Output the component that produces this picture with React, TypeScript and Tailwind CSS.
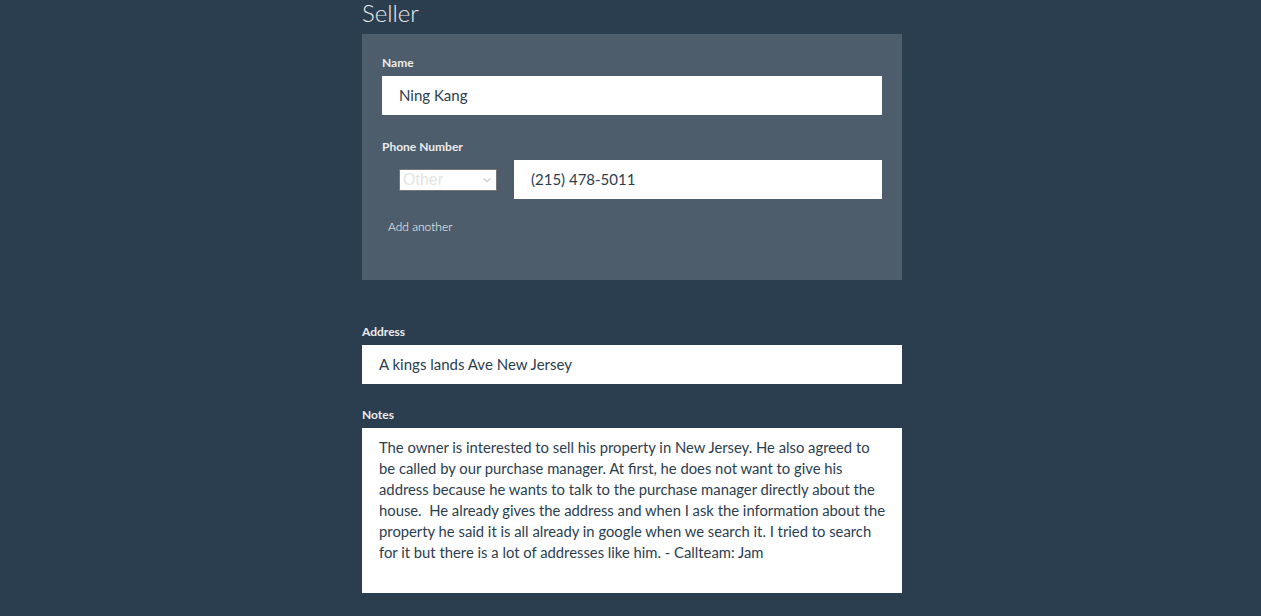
import React from "react";

const font = { fontFamily: "Lato, 'Open Sans', sans-serif" };

export default function App() {
  return (
    <div className="min-h-[616px] w-full bg-[#2b3e50] text-white" style={font}>
      <div className="mx-auto w-[543px] pl-[3px]">
        <h2 className="m-0 h-[34px] text-[24px] font-light leading-[26px] text-[#ebebeb]">Seller</h2>
        <div className="h-[246px] bg-[#4e5d6c] px-[20px] pt-[21px]">
          <label className="block h-[15px] text-[12px] font-bold leading-[15px] text-[#ebebeb]">Name</label>
          <div className="mt-[6px] flex h-[39px] items-center bg-white px-[17px] text-[15px] text-[#2b3e50]">
            Ning Kang
          </div>
          <label className="mt-[24px] block h-[15px] text-[12px] font-bold leading-[15px] text-[#ebebeb]">
            Phone Number
          </label>
          <div className="mt-[6px] flex h-[39px] items-center">
            <div className="ml-[17px] flex h-[22px] w-[98px] items-center justify-between border border-[#767676] bg-white pl-[3px] pr-[4px]">
              <span className="text-[16px] leading-[18px] text-[#e3e3e3]" style={{ fontFamily: "'Liberation Sans', Arial, sans-serif" }}>
                Other
              </span>
              <svg width="10" height="10" viewBox="0 0 10 10" fill="none">
                <path d="M1.5 3.5 L5 6.5 L8.5 3.5" stroke="#d0d0d0" strokeWidth="1.5" />
              </svg>
            </div>
            <div className="ml-[17px] flex h-[39px] flex-1 items-center bg-white px-[17px] text-[15px] text-[#2b3e50]">
              (215) 478-5011
            </div>
          </div>
          <div className="ml-[6px] mt-[20px] text-[12px] font-light leading-[15px] text-white">Add another</div>
        </div>
        <label className="mt-[44px] block h-[15px] text-[12px] font-bold leading-[15px] text-[#ebebeb]">Address</label>
        <div className="mt-[6px] flex h-[39px] items-center bg-white px-[17px] text-[15px] text-[#2b3e50]">
          A kings lands Ave New Jersey
        </div>
        <label className="mt-[23px] block h-[15px] text-[12px] font-bold leading-[15px] text-[#ebebeb]">Notes</label>
        <div className="mt-[6px] h-[165px] bg-white px-[17px] pt-[9px] text-[14.8px] leading-[21px] text-[#2b3e50]">
          The owner is interested to sell his property in New Jersey. He also agreed to be called by our purchase manager. At first, he does not want to give his address because he wants to talk to the purchase manager directly about the house.&nbsp; He already gives the address and when I ask the information about the property he said it is all already in google when we search it. I tried to search for it but there is a lot of addresses like him. - Callteam: Jam
        </div>
      </div>
    </div>
  );
}
